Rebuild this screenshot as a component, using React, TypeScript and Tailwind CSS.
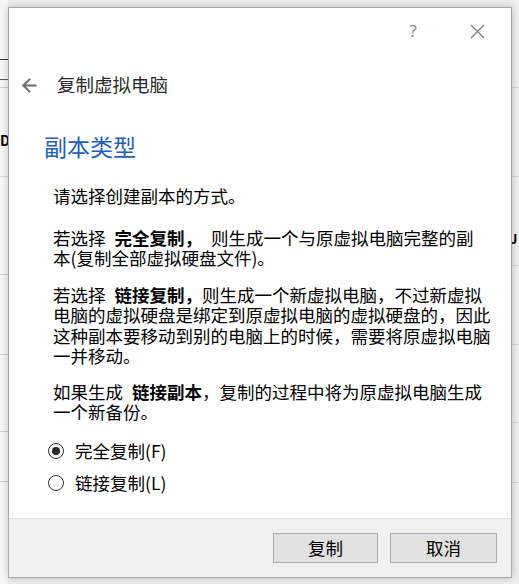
import { ArrowLeft } from 'lucide-react'

const cjk = "font-['Noto_Sans_CJK_SC','Noto_Sans',sans-serif]"

// lines of the window behind the dialog, as [height, border colour]
const leftRows: [number, string][] = [
  [60, 'border-[#3a3a3a]'],
  [20, 'border-[#5a5a5a]'],
  [8, 'border-[#cfcfcf]'],
  [89, 'border-[#d6d6d6]'],
  [98, 'border-[#d0d0d0]'],
  [80, 'border-[#d0d0d0]'],
  [77, 'border-[#d0d0d0]'],
  [50, 'border-[#d0d0d0]'],
]
const rightRows: [number, string][] = [
  [88, 'border-[#d0d0d0]'],
  [89, 'border-[#d0d0d0]'],
  [89, 'border-[#d0d0d0]'],
  [79, 'border-[#d0d0d0]'],
  [78, 'border-[#d0d0d0]'],
  [60, 'border-[#d0d0d0]'],
]

function Gap() {
  return <span className="inline-block w-[9px]" />
}

function Radio({ checked, label }: { checked?: boolean; label: string }) {
  return (
    <div className="flex h-[24px] items-center">
      <span className="ml-[39px] flex h-[16px] w-[16px] items-center justify-center rounded-full border border-[#333] bg-white">
        {checked && <span className="h-[8px] w-[8px] rounded-full bg-[#2a2a2a]" />}
      </span>
      <span className="ml-[11px] text-[17.5px] leading-[24px] text-black">{label}</span>
    </div>
  )
}

export default function App() {
  return (
    <div className={`relative h-[584px] w-[519px] overflow-hidden bg-[#ececec] ${cjk}`}>
      {/* window behind the dialog */}
      <div className="flex h-full w-full justify-between">
        <div className="flex w-[8px] flex-col bg-[#f6f6f6]">
          {leftRows.map(([h, c], i) => (
            <div key={i} className={`border-b ${c}`} style={{ height: h }}>
              {i === 3 && (
                <div className="mt-[44px] text-[14px] leading-[16px] font-bold text-black">
                  D
                </div>
              )}
            </div>
          ))}
        </div>
        <div className="flex w-[8px] flex-col bg-[#eeeeee]">
          {rightRows.map(([h, c], i) => (
            <div key={i} className={`border-b ${c}`} style={{ height: h }}>
              {i === 2 && (
                <div className="mt-[55px] -ml-[1px] text-[13px] leading-[14px] font-bold text-black">
                  J
                </div>
              )}
            </div>
          ))}
        </div>
      </div>

      {/* dialog */}
      <div className="absolute top-[7px] left-[8px] flex h-[571px] w-[504px] flex-col border border-[#a8a8a8] bg-white shadow-[0_0_7px_rgba(0,0,0,0.22)]">
        <div className="flex h-[46px] items-center justify-end">
          <span className="mr-[53px] font-['Noto_Sans',sans-serif] text-[17px] text-[#8c8c8c]">?</span>
          <svg className="mr-[26px]" width="15" height="15" viewBox="0 0 15 15">
            <path d="M1 1L14 14M14 1L1 14" stroke="#7a7a7a" strokeWidth="1.2" />
          </svg>
        </div>

        <div className="flex h-[62px] items-center">
          <ArrowLeft className="ml-[10px] text-[#6e6e6e]" size={21} strokeWidth={2.4} />
          <span className="ml-[17px] text-[18.5px] text-[#2b2b2b]">复制虚拟电脑</span>
        </div>

        <div className="mt-[15px] ml-[35px] h-[30px] text-[23px] leading-[30px] text-[#2160b8]">
          副本类型
        </div>

        <div className="mt-[25px] ml-[44px] flex flex-col text-[17.5px] leading-[20.5px] whitespace-nowrap text-black">
          <p>请选择创建副本的方式。</p>
          <p className="mt-[21px]">
            若选择<Gap />
            <b>完全复制，</b>
            <Gap />
            则生成一个与原虚拟电脑完整的副
            <br />
            本(复制全部虚拟硬盘文件)。
          </p>
          <p className="mt-[16px]">
            若选择<Gap />
            <b>链接复制，</b>则生成一个新虚拟电脑，不过新虚拟
            <br />
            电脑的虚拟硬盘是绑定到原虚拟电脑的虚拟硬盘的，因此
            <br />
            这种副本要移动到别的电脑上的时候，需要将原虚拟电脑
            <br />
            一并移动。
          </p>
          <p className="mt-[15px]">
            如果生成<Gap />
            <b>链接副本</b>，复制的过程中将为原虚拟电脑生成
            <br />
            一个新备份。
          </p>
        </div>

        <div className="mt-[16px] flex flex-col gap-[8px]">
          <Radio checked label="完全复制(F)" />
          <Radio label="链接复制(L)" />
        </div>

        <div className="mt-auto flex h-[59px] items-start justify-end gap-[12px] border-t border-[#e3e3e3] bg-[#f0f0f0] pt-[14px] pr-[14px]">
          <button className="h-[30px] w-[105px] border border-[#adadad] bg-[#e1e1e1] text-[17.5px] leading-[28px] text-black">
            复制
          </button>
          <button className="h-[30px] w-[107px] border border-[#adadad] bg-[#e1e1e1] text-[17.5px] leading-[28px] text-black">
            取消
          </button>
        </div>
      </div>
    </div>
  )
}
